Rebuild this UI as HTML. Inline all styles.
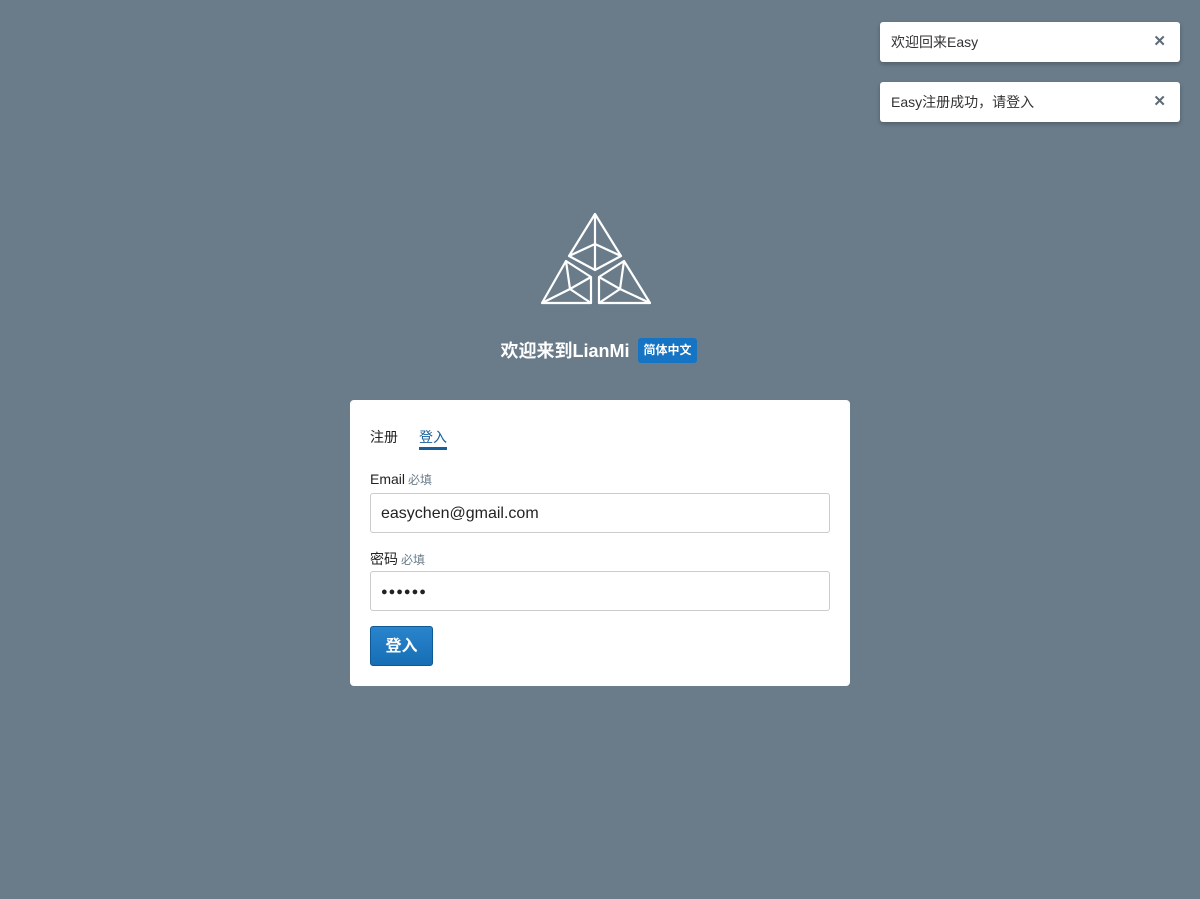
<!DOCTYPE html>
<html><head><meta charset="utf-8"><style>
*{box-sizing:border-box;margin:0;padding:0}
body{width:1200px;height:899px;background:#6a7c8a;font-family:"Liberation Sans","Noto Sans CJK SC",sans-serif;position:relative;overflow:hidden;color:#222}
.toast{position:absolute;left:880px;width:300px;height:40px;background:#fff;border-radius:3px;box-shadow:0 2px 4px rgba(0,0,0,.25);font-size:14px;line-height:40px;padding-left:11px;color:#333}
.toast .x{position:absolute;right:14px;top:0;font-size:15px;color:#5c6b78;font-weight:bold}
.title{position:absolute;top:337px;left:0;width:1200px;text-align:center;color:#fff;font-size:18px;font-weight:bold}
.badge{position:absolute;left:638px;top:338px;width:59px;height:25px;background:#1574c4;border-radius:3px;color:#fff;font-size:12px;font-weight:bold;line-height:25px;text-align:center}
.card{position:absolute;left:350px;top:400px;width:500px;height:286px;background:#fff;border-radius:4px}
.tab{position:absolute;top:27px;font-size:14px}
.lbl{position:absolute;left:20px;font-size:14px;color:#222}
.lbl small{font-size:12px;color:#6a7c8a;margin-left:3px}
.inp{position:absolute;left:20px;width:460px;height:40px;border:1px solid #ccc;border-radius:3px;font-size:16px;line-height:40px;padding-left:10px;color:#222}
.btn{position:absolute;left:20px;top:226px;width:63px;height:40px;background:linear-gradient(#2a84cc,#166fb5);border:1px solid #0f5a94;border-radius:3px;color:#fff;font-size:16px;font-weight:bold;text-align:center;line-height:40px}
</style></head><body>
<div class="toast" style="top:22px">欢迎回来Easy<span class="x">✕</span></div>
<div class="toast" style="top:82px">Easy注册成功，请登入<span class="x">✕</span></div>
<svg style="position:absolute;left:0;top:0" width="1200" height="899">
<g fill="none" stroke="#fff" stroke-width="2.2" stroke-linejoin="round">
<polygon points="595,214 621,256 595,270 569,256"/>
<line x1="595" y1="214" x2="595" y2="270"/><line x1="569" y1="256" x2="595" y2="244"/><line x1="621" y1="256" x2="595" y2="244"/>
<polygon points="566,261 591,277 591,303 542,303"/>
<line x1="566" y1="261" x2="570" y2="289"/><line x1="542" y1="303" x2="570" y2="289"/><line x1="591" y1="277" x2="570" y2="289"/><line x1="591" y1="303" x2="570" y2="289"/>
<polygon points="624,261 599,277 599,303 650,303"/>
<line x1="624" y1="261" x2="620" y2="289"/><line x1="650" y1="303" x2="620" y2="289"/><line x1="599" y1="277" x2="620" y2="289"/><line x1="599" y1="303" x2="620" y2="289"/>
</g></svg>
<div class="title"><span style="margin-right:70px">欢迎来到LianMi</span></div>
<div class="badge">简体中文</div>
<div class="card">
<div class="tab" style="left:20px">注册</div>
<div class="tab" style="left:69px;color:#1a5e97">登入</div>
<div style="position:absolute;left:69px;top:47px;width:28px;height:3px;background:#1a5e97"></div>
<div class="lbl" style="top:71px">Email<small>必填</small></div>
<div class="inp" style="top:93px">easychen@gmail.com</div>
<div class="lbl" style="top:149px">密码<small>必填</small></div>
<div class="inp" style="top:171px;font-size:11px;letter-spacing:1px">●●●●●●</div>
<div class="btn">登入</div>
</div>
</body></html>
